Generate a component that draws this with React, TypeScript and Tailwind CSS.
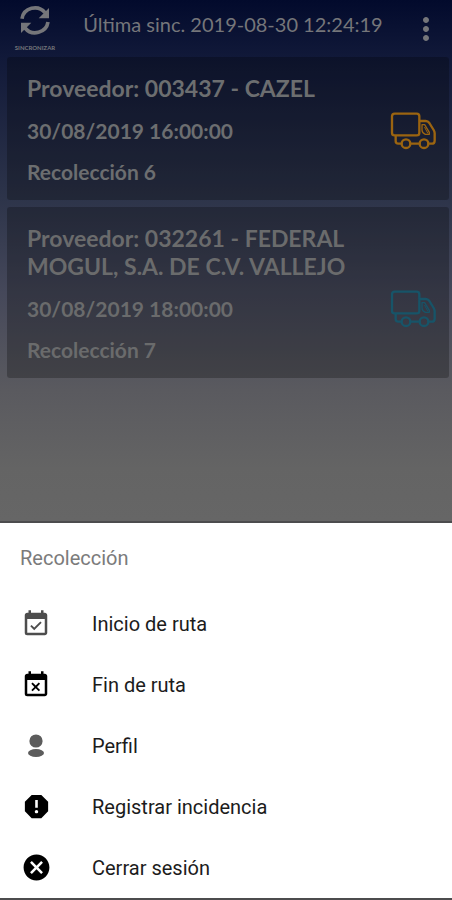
import type { ReactNode } from "react"
import { MdCancel, MdEventAvailable, MdEventBusy, MdMoreVert, MdReport } from "react-icons/md"

type Pickup = {
  supplier: string
  date: string
  label: string
  truckColor: string
  textColor: string
}

const pickups: Pickup[] = [
  {
    supplier: "003437 - CAZEL",
    date: "30/08/2019 16:00:00",
    label: "Recolección 6",
    truckColor: "text-[#9b6410]",
    textColor: "text-[#6c6e70]",
  },
  {
    supplier: "032261 - FEDERAL MOGUL, S.A. DE C.V. VALLEJO",
    date: "30/08/2019 18:00:00",
    label: "Recolección 7",
    truckColor: "text-[#175468]",
    textColor: "text-[#6a6b6c]",
  },
]

export default function App() {
  return (
    <div className="flex min-h-screen flex-col bg-white">
      <main className="flex-1 bg-[linear-gradient(to_bottom,#020a2c_0%,#111939_11%,#2d344a_38%,#45485a_56%,#5a5a5f_75%,#646464_90%,#666666_100%)] font-['Lato',sans-serif]">
        <Header />
        <ul className="flex flex-col gap-[7px] pl-[7px] pr-[3px]">
          {pickups.map((pickup) => (
            <PickupCard key={pickup.label} pickup={pickup} />
          ))}
        </ul>
      </main>
      <BottomSheet />
    </div>
  )
}

const Header = () => {
  return (
    <header className="flex h-[57px] items-start justify-between pl-3 pr-2 text-[#75767a]">
      <button className="flex w-[46px] flex-col items-center gap-2 pt-1">
        <SyncIcon />
        <span className="text-[6px] font-bold leading-[8px]">SINCRONIZAR</span>
      </button>
      <h1 className="pt-[10px] text-[20px] leading-7">Última sinc. 2019-08-30 12:24:19</h1>
      <button aria-label="Más opciones" className="pt-[11px]">
        <MdMoreVert size={36} />
      </button>
    </header>
  )
}

const PickupCard = ({ pickup }: { pickup: Pickup }) => {
  return (
    <li
      className={`flex flex-col gap-[17px] rounded-[3px] bg-black/25 pb-4 pl-5 pr-3 pt-[17px] font-bold ${pickup.textColor}`}
    >
      <h2 className="pr-16 text-[23px] leading-7">{`Proveedor: ${pickup.supplier}`}</h2>
      <div className="flex h-6 items-center justify-between">
        <p className="text-[21px] leading-6">{pickup.date}</p>
        <TruckIcon className={pickup.truckColor} />
      </div>
      <p className="text-[21px] leading-6">{pickup.label}</p>
    </li>
  )
}

const BottomSheet = () => {
  return (
    <section className="border-y-2 border-[#4c4c4e] bg-white font-['Roboto',sans-serif] text-[20px]">
      <h2 className="flex h-[70px] items-center px-5 text-[#7b7b7b]">Recolección</h2>
      <SheetItem icon={<MdEventAvailable size={30} className="text-[#4d4d4d]" />}>Inicio de ruta</SheetItem>
      <SheetItem icon={<MdEventBusy size={30} />}>Fin de ruta</SheetItem>
      <SheetItem icon={<ProfileIcon />}>Perfil</SheetItem>
      <SheetItem icon={<MdReport size={31} />}>Registrar incidencia</SheetItem>
      <SheetItem icon={<MdCancel size={31} />}>Cerrar sesión</SheetItem>
    </section>
  )
}

const SheetItem = ({ icon, children }: { icon: ReactNode; children: ReactNode }) => {
  return (
    <button className="flex h-[61px] w-full items-center gap-10 px-5 text-left text-[#1c1c1c]">
      <span className="flex w-8 justify-center text-black">{icon}</span>
      {children}
    </button>
  )
}

const SyncIcon = () => (
  <svg width="32" height="32" viewBox="0 0 96 96" fill="none" aria-hidden="true">
    <path d="M9 44A39 38 0 0 1 78 26" stroke="currentColor" strokeWidth="11" />
    <path d="M90 12v31H59z" fill="currentColor" />
    <path d="M87 54A39 38 0 0 1 18 72" stroke="currentColor" strokeWidth="11" />
    <path d="M6 87V56h31z" fill="currentColor" />
  </svg>
)

const TruckIcon = ({ className }: { className: string }) => (
  <svg
    width="47"
    height="38"
    viewBox="0 0 141 114"
    fill="none"
    stroke="currentColor"
    strokeWidth="7"
    strokeLinejoin="round"
    strokeLinecap="round"
    className={className}
    aria-hidden="true"
  >
    <rect x="6" y="5" width="82" height="65" rx="8" />
    <path d="M17 73v14q0 8 8 8h9M62 95h27M116 95h9q9 0 9-9V64q0-5-3-10l-13-21q-4-6-11-6H90" />
    <path d="M96 38h8l14 23v6h-12q-10-4-10-13z" strokeWidth="4" />
    <path d="M104 46l9 17" strokeWidth="3" />
    <circle cx="48" cy="95" r="13" />
    <circle cx="102" cy="95" r="13" />
  </svg>
)

const ProfileIcon = () => (
  <svg width="30" height="30" viewBox="0 0 30 30" fill="#5c5c5c" aria-hidden="true">
    <circle cx="15" cy="10" r="6.6" />
    <ellipse cx="15" cy="22" rx="8" ry="4" />
  </svg>
)
